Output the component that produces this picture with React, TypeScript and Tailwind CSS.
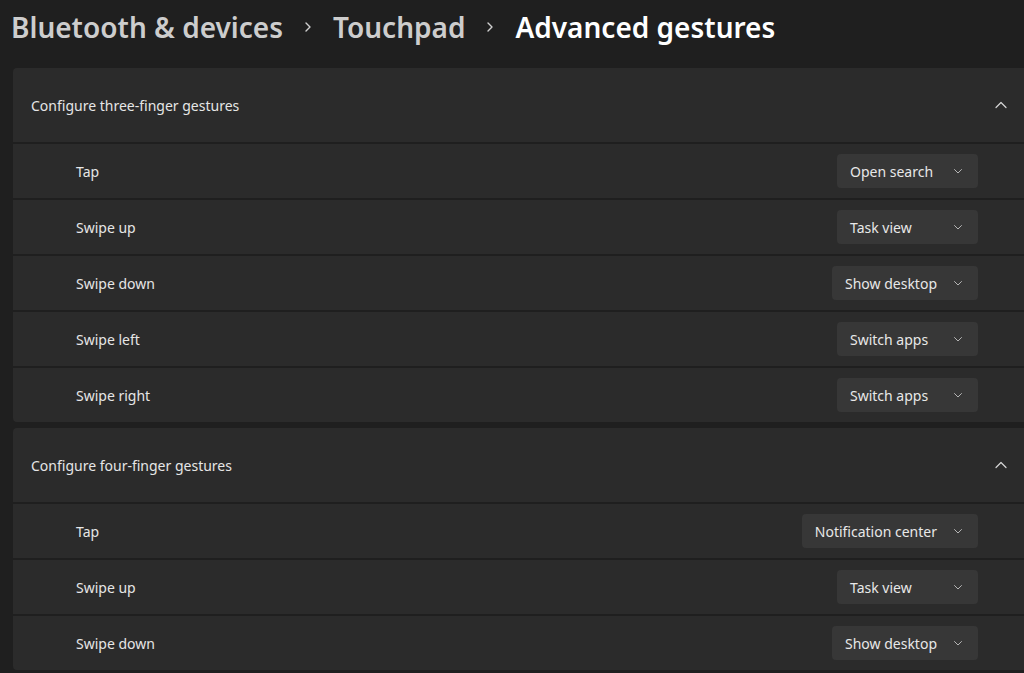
import React from "react";

const font = { fontFamily: '"Segoe UI", "Noto Sans", "Liberation Sans", sans-serif' };

type Row = { label: string; value: string };

const groups: { title: string; rows: Row[] }[] = [
  {
    title: "Configure three-finger gestures",
    rows: [
      { label: "Tap", value: "Open search" },
      { label: "Swipe up", value: "Task view" },
      { label: "Swipe down", value: "Show desktop" },
      { label: "Swipe left", value: "Switch apps" },
      { label: "Swipe right", value: "Switch apps" },
    ],
  },
  {
    title: "Configure four-finger gestures",
    rows: [
      { label: "Tap", value: "Notification center" },
      { label: "Swipe up", value: "Task view" },
      { label: "Swipe down", value: "Show desktop" },
    ],
  },
];

function ChevronUp() {
  return (
    <svg width="14" height="14" viewBox="0 0 14 14" fill="none" className="text-[#d6d6d6]">
      <path d="M2 9.5 L7 4.5 L12 9.5" stroke="currentColor" strokeWidth="1.2" strokeLinecap="round" strokeLinejoin="round" />
    </svg>
  );
}

function ChevronDown() {
  return (
    <svg width="10" height="10" viewBox="0 0 10 10" fill="none" className="text-[#b5b5b5]">
      <path d="M1.5 3.5 L5 7 L8.5 3.5" stroke="currentColor" strokeWidth="1" strokeLinecap="round" strokeLinejoin="round" />
    </svg>
  );
}

function Crumb() {
  return (
    <svg width="10" height="14" viewBox="0 0 10 14" fill="none" className="text-[#cfcfcf]">
      <path d="M3 3 L7 7 L3 11" stroke="currentColor" strokeWidth="1.4" strokeLinecap="round" strokeLinejoin="round" />
    </svg>
  );
}

function Dropdown({ value }: { value: string }) {
  return (
    <div className="flex h-[34px] min-w-[141px] items-center rounded-[4px] bg-[#373737] pl-[13px]">
      <span className="flex-1 text-[14px] text-[#e8e8e8] whitespace-nowrap">{value}</span>
      <span className="flex w-[41px] justify-center">
        <ChevronDown />
      </span>
    </div>
  );
}

export default function App() {
  return (
    <div className="h-[673px] w-full overflow-hidden bg-[#1f1f1f]" style={font}>
      <div className="flex h-[54px] items-center gap-[20px] pl-[11px] text-[28px] leading-none">
        <span className="text-[#cdcdcd] font-semibold">Bluetooth &amp; devices</span>
        <Crumb />
        <span className="text-[#cdcdcd] font-semibold">Touchpad</span>
        <Crumb />
        <span className="text-white font-semibold">Advanced gestures</span>
      </div>

      <div className="mt-[14px] flex flex-col gap-[6px] pl-[13px] -mr-[8px]">
        {groups.map((g) => (
          <div key={g.title} className="flex flex-col gap-[2px]">
            <div className="flex h-[74px] items-center justify-between rounded-t-[4px] bg-[#2b2b2b] pl-[18px] pr-[24px]">
              <span className="text-[14px] text-[#e6e6e6]">{g.title}</span>
              <ChevronUp />
            </div>
            {g.rows.map((r, i) => (
              <div
                key={r.label}
                className={
                  "flex h-[54px] items-center justify-between bg-[#2b2b2b] pl-[63px] pr-[54px] " +
                  (i === g.rows.length - 1 ? "rounded-b-[4px]" : "")
                }
              >
                <span className="text-[14px] text-[#e6e6e6]">{r.label}</span>
                <Dropdown value={r.value} />
              </div>
            ))}
          </div>
        ))}
      </div>
    </div>
  );
}
